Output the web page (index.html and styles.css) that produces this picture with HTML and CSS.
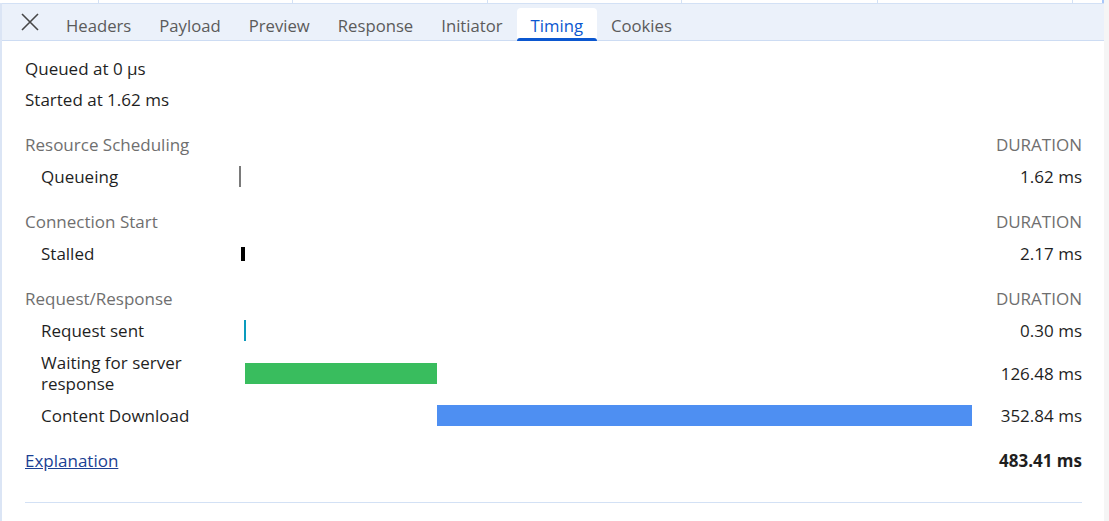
FILE: index.html
```html
<!DOCTYPE html>
<html lang="en">
<head>
<meta charset="utf-8">
<title>Timing</title>
<link rel="stylesheet" href="styles.css">
</head>
<body>
<div class="app">
  <div class="main">
    <div class="grid-head">
      <div class="gcell" style="width:99px"></div>
      <div class="gcell" style="width:194px"></div>
      <div class="gcell" style="width:195px"></div>
      <div class="gcell" style="width:194px"></div>
      <div class="gcell" style="width:196px"></div>
      <div class="gcell" style="width:195px"></div>
      <div class="gcell last"></div>
    </div>
    <div class="panel">
      <div class="tabbar">
        <button class="close" aria-label="Close">
          <svg width="18" height="18" viewBox="0 0 18 18"><path d="M1 1 L17 17 M17 1 L1 17" stroke="#474747" stroke-width="1.6" fill="none"/></svg>
        </button>
        <div class="tab">Headers</div>
        <div class="tab">Payload</div>
        <div class="tab">Preview</div>
        <div class="tab">Response</div>
        <div class="tab">Initiator</div>
        <div class="tab active">Timing</div>
        <div class="tab">Cookies</div>
      </div>
      <div class="content">
        <div class="meta">Queued at 0 μs</div>
        <div class="meta">Started at 1.62 ms</div>

        <div class="row group">
          <div class="label">Resource Scheduling</div>
          <div class="track"></div>
          <div class="dur">DURATION</div>
        </div>
        <div class="row">
          <div class="label sub">Queueing</div>
          <div class="track"><span class="bar queueing" style="margin-left:0%;width:0.335%"></span></div>
          <div class="val">1.62 ms</div>
        </div>

        <div class="row group">
          <div class="label">Connection Start</div>
          <div class="track"></div>
          <div class="dur">DURATION</div>
        </div>
        <div class="row">
          <div class="label sub">Stalled</div>
          <div class="track"><span class="bar stalled" style="margin-left:0.335%;width:0.449%"></span></div>
          <div class="val">2.17 ms</div>
        </div>

        <div class="row group">
          <div class="label">Request/Response</div>
          <div class="track"></div>
          <div class="dur">DURATION</div>
        </div>
        <div class="row">
          <div class="label sub">Request sent</div>
          <div class="track"><span class="bar sending" style="margin-left:0.682%;width:0.273%"></span></div>
          <div class="val">0.30 ms</div>
        </div>
        <div class="row">
          <div class="label sub">Waiting for server response</div>
          <div class="track"><span class="bar waiting" style="margin-left:0.846%;width:26.164%"></span></div>
          <div class="val">126.48 ms</div>
        </div>
        <div class="row">
          <div class="label sub">Content Download</div>
          <div class="track"><span class="bar download" style="margin-left:27.010%;width:72.990%"></span></div>
          <div class="val">352.84 ms</div>
        </div>

        <div class="row total">
          <div class="label"><a href="#" class="link">Explanation</a></div>
          <div class="track"></div>
          <div class="val strong">483.41 ms</div>
        </div>
        <div class="divider"></div>
      </div>
    </div>
  </div>
  <div class="scrollbar"></div>
</div>
</body>
</html>
```

FILE: styles.css
```css
* { box-sizing: border-box; }
html, body { margin: 0; padding: 0; height: 100%; }
body {
  font-family: "Open Sans", "Noto Sans", sans-serif;
  font-size: 17px;
  color: #1f1f1f;
  background: #ffffff;
  overflow: hidden;
}
.app {
  display: flex;
  width: 1109px;
  height: 521px;
}
.main {
  width: 1104px;
  display: flex;
  flex-direction: column;
}
.scrollbar {
  width: 5px;
  background: #f5f5f5;
}
.grid-head {
  display: flex;
  height: 3px;
  background: #ffffff;
}
.gcell {
  height: 3px;
  border-right: 1px solid #d3e1f5;
}
.gcell.last {
  flex: 1;
  border-right: 2px solid #a8c7fa;
}
.panel {
  flex: 1;
  display: flex;
  flex-direction: column;
  border-left: 2px solid #dbe5f5;
}
.tabbar {
  height: 38px;
  display: flex;
  align-items: flex-end;
  background: #ebf1fa;
  border-top: 1px solid #d3e1f5;
  border-bottom: 1px solid #cddcf3;
  padding-left: 17px;
}
.close {
  width: 22px;
  height: 36px;
  border: 0;
  background: transparent;
  padding: 0;
  margin-right: 11px;
  display: flex;
  align-items: center;
  justify-content: center;
  align-self: flex-start;
}
.tab {
  height: 33px;
  padding: 1px 14px 0;
  line-height: 33px;
  font-size: 16.7px;
  color: #5b5b5b;
  border-radius: 4px 4px 0 0;
  position: relative;
  margin-bottom: -1px;
}
.tab.active {
  background: #ffffff;
  color: #0b57d0;
}
.tab.active::after {
  content: "";
  position: absolute;
  left: 0;
  right: 0;
  bottom: 0;
  height: 3px;
  background: #0b57d0;
  border-radius: 3px 3px 0 0;
}
.content {
  flex: 1;
  padding: 12px 22px 0 23px;
}
.meta {
  height: 31px;
  line-height: 31px;
}
.row {
  display: grid;
  grid-template-columns: 214px 1fr 110px;
  align-items: center;
  min-height: 32px;
  padding: 6px 0 5px;
  line-height: 21px;
}
.row.group,
.row.total {
  padding-top: 19px;
}
.label {
  color: #1f1f1f;
}
.group .label,
.dur {
  color: #6f6f6f;
}
.label.sub {
  padding-left: 16px;
  padding-right: 20px;
}
.dur, .val {
  text-align: right;
}
.val.strong {
  font-weight: 700;
}
.track {
  display: flex;
  align-items: center;
  height: 21px;
}
.bar {
  display: block;
  height: 21px;
  flex: none;
}
.bar.queueing {
  background: #7a7a7a;
  min-width: 2px;
}
.bar.stalled {
  background: #000000;
  height: 14px;
  min-width: 4px;
}
.bar.sending {
  background: #0a9bbd;
  min-width: 2px;
}
.bar.waiting {
  background: #39bd5e;
}
.bar.download {
  background: #4e8ff2;
}
.link {
  color: #1b3f93;
  text-decoration: underline;
}
.divider {
  margin-top: 26px;
  height: 1px;
  background: #d3e1f5;
}
```
